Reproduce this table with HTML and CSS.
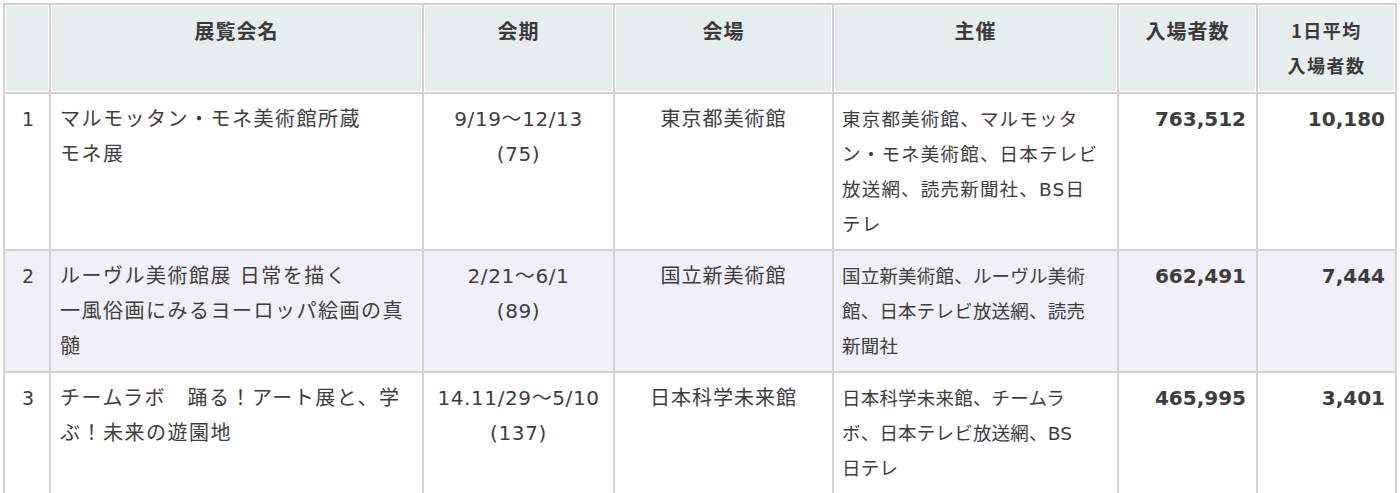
FILE: index.html
```html
<!DOCTYPE html>
<html lang="ja">
<head>
<meta charset="utf-8">
<title>展覧会入場者数</title>
<link rel="stylesheet" href="styles.css">
</head>
<body>
<table class="ranking">
  <colgroup>
    <col class="c-no">
    <col class="c-title">
    <col class="c-date">
    <col class="c-venue">
    <col class="c-org">
    <col class="c-num">
    <col class="c-avg">
  </colgroup>
  <thead>
    <tr>
      <th></th>
      <th>展覧会名</th>
      <th>会期</th>
      <th>会場</th>
      <th>主催</th>
      <th>入場者数</th>
      <th class="small">1日平均<br>入場者数</th>
    </tr>
  </thead>
  <tbody>
    <tr>
      <td class="no">1</td>
      <td class="title">マルモッタン・モネ美術館所蔵<br>モネ展</td>
      <td class="center date">9/19～12/13<br>(75)</td>
      <td class="center jp">東京都美術館</td>
      <td class="org wide">東京都美術館、マルモッタ<br>ン・モネ美術館、日本テレビ<br>放送網、読売新聞社、BS日<br>テレ</td>
      <td class="num">763,512</td>
      <td class="num">10,180</td>
    </tr>
    <tr class="odd">
      <td class="no">2</td>
      <td class="title">ルーヴル美術館展 日常を描く<br>一風俗画にみるヨーロッパ絵画の真<br>髄</td>
      <td class="center date">2/21～6/1<br>(89)</td>
      <td class="center jp">国立新美術館</td>
      <td class="org">国立新美術館、ルーヴル美術<br>館、日本テレビ放送網、読売<br>新聞社</td>
      <td class="num">662,491</td>
      <td class="num">7,444</td>
    </tr>
    <tr>
      <td class="no">3</td>
      <td class="title">チームラボ　踊る！アート展と、学<br>ぶ！未来の遊園地</td>
      <td class="center date">14.11/29～5/10<br>(137)</td>
      <td class="center jp">日本科学未来館</td>
      <td class="org">日本科学未来館、チームラ<br>ボ、日本テレビ放送網、BS<br>日テレ</td>
      <td class="num">465,995</td>
      <td class="num">3,401</td>
    </tr>
  </tbody>
</table>
</body>
</html>
```

FILE: styles.css
```css
html, body {
  margin: 0;
  padding: 0;
  background: #ffffff;
}

body {
  font-family: "DejaVu Sans", "Noto Sans CJK JP", sans-serif;
  font-size: 20px;
  color: #3d3d3d;
}

.ranking {
  margin: 3px 3px 0 3px;
  width: 1394px;
  table-layout: fixed;
  border-collapse: separate;
  border-spacing: 2px;
  background: #d2d2d2;
}

.c-no { width: 44px; }
.c-title { width: 371px; }
.c-date { width: 189px; }
.c-venue { width: 217px; }
.c-org { width: 283px; }
.c-num { width: 137px; }
.c-avg { width: 137px; }

.ranking th {
  background: #e6eeee;
  border: 1px solid #ffffff;
  padding: 7px 6px 8px;
  line-height: 35px;
  text-align: center;
  vertical-align: top;
  font-weight: bold;
  font-family: "Noto Sans CJK JP", sans-serif;
  font-size: 20px;
  letter-spacing: 1px;
  color: #3a3a3a;
}

.ranking th.small {
  font-size: 18px;
  letter-spacing: 1.5px;
}

.ranking td {
  background: #ffffff;
  padding: 8px 9px 7px;
  line-height: 35px;
  vertical-align: top;
  white-space: nowrap;
  overflow: hidden;
}

.ranking tr.odd td {
  background: #f0f0f6;
}

.ranking td.no {
  text-align: center;
  padding-left: 4px;
  padding-right: 2px;
  font-size: 19px;
}

.ranking td.title {
  letter-spacing: 1.5px;
}

.ranking td.center {
  text-align: center;
}

.ranking td.date {
  letter-spacing: 0.6px;
}

.ranking td.jp {
  letter-spacing: 1px;
}

.ranking td.org {
  padding-left: 8px;
  font-size: 18.5px;
  letter-spacing: 0.2px;
}

.ranking td.org.wide {
  letter-spacing: 1.2px;
}

.ranking td.num {
  text-align: right;
  font-weight: bold;
  padding-right: 10px;
}
```
